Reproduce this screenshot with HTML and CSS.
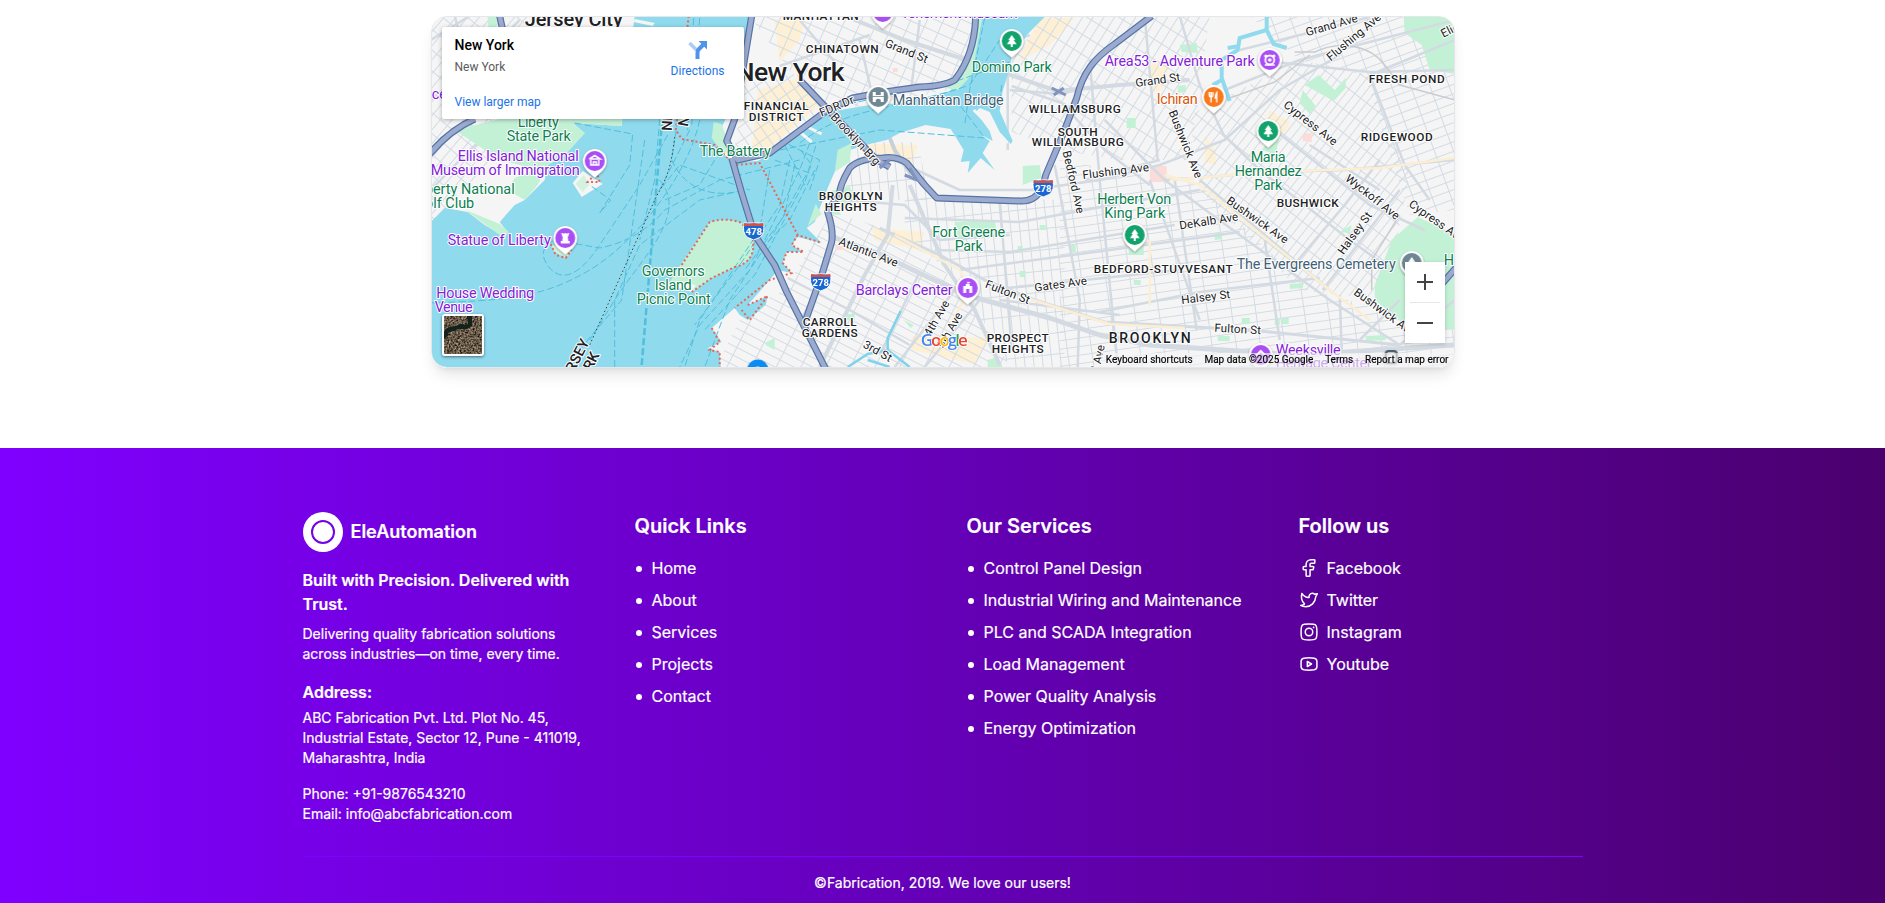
FILE: index.html
```html
<!DOCTYPE html>
<html lang="en">
<head>
<meta charset="utf-8">
<title>EleAutomation</title>
<link rel="stylesheet" href="styles.css">
</head>
<body>
<main class="map-section">
  <div class="map">
    <svg class="map-canvas" viewBox="432.3 17 1022 350" width="1022" height="350">
      <defs>
        <pattern id="g-man" width="15" height="11" patternUnits="userSpaceOnUse" patternTransform="rotate(24)"><path class="st" d="M0 .5H15M.5 0V11"/></pattern>
        <pattern id="g-fid" width="10" height="12" patternUnits="userSpaceOnUse" patternTransform="rotate(-35)"><path class="st" d="M0 .5H10M.5 0V12"/></pattern>
        <pattern id="g-wil" width="17" height="9" patternUnits="userSpaceOnUse" patternTransform="rotate(-58)"><path class="st" d="M0 .5H17M.5 0V9"/></pattern>
        <pattern id="g-bus" width="19" height="7.5" patternUnits="userSpaceOnUse" patternTransform="rotate(-52)"><path class="st" d="M0 .5H19M.5 0V7.5"/></pattern>
        <pattern id="g-bed" width="24" height="8.5" patternUnits="userSpaceOnUse" patternTransform="rotate(-8)"><path class="st" d="M0 .5H24M.5 0V8.5"/></pattern>
        <pattern id="g-cla" width="9" height="21" patternUnits="userSpaceOnUse" patternTransform="rotate(-6)"><path class="st" d="M0 .5H9M.5 0V21"/></pattern>
        <pattern id="g-car" width="22" height="8.5" patternUnits="userSpaceOnUse" patternTransform="rotate(27)"><path class="st" d="M0 .5H22M.5 0V8.5"/></pattern>
        <pattern id="g-red" width="9" height="16" patternUnits="userSpaceOnUse" patternTransform="rotate(40)"><path class="st" d="M0 .5H9M.5 0V16"/></pattern>
        <pattern id="g-rid" width="18" height="9" patternUnits="userSpaceOnUse" patternTransform="rotate(-20)"><path class="st" d="M0 .5H18M.5 0V9"/></pattern>
        <g id="pin"><path d="M0 17C-3 13-12 9-12 0A12 12 0 0 1 12 0C12 9 3 13 0 17Z" fill="#fff"/><circle r="10"/></g>
        <path id="tree" d="M0-6L3.5-1H2L4.8 3.3H1V6H-1V3.3H-4.8L-2-1H-3.5Z" fill="#fff"/>
        <g id="shield"><path d="M-9.500-8H9.500Q12 2 6 6.500Q2 8 0 9Q-2 8-6 6.500Q-12 2-9.500-8Z" fill="#1967d2" stroke="#fff"/><path d="M-9.500-8L-5-7L0-8L5-7L9.500-8L10-5H-10Z" fill="#d94f43"/></g>
      </defs>

      <rect x="431" y="16" width="1025" height="352" fill="#f5f5f5"/>

      <!-- business areas -->
      <g fill="#fdf0d5">
        <path d="M758 90L800 78L820 105L770 148L752 150ZM775 20L806 16L800 40L780 62ZM1040 18H1075L1050 45L1018 62ZM850 143L918 145L912 165L870 158ZM872 228L925 232L920 250L875 240ZM1205 135L1216 150V165L1205 162ZM1270 110L1290 122L1285 134L1265 125ZM912 336L990 338L975 364L912 350Z"/>
        <path d="M1152 62L1170 64L1163 90L1150 92Z"/>
      </g>

      <!-- neighbourhood street grids -->
      <path fill="url(#g-red)" d="M431 16H530V119L431 225Z"/>
      <path fill="url(#g-man)" d="M750 16H980L960 88L830 112L790 70Z"/>
      <path fill="url(#g-fid)" d="M745 70L800 75L825 112L770 152L735 150Z"/>
      <path fill="url(#g-wil)" d="M1012 60L1045 16H1210L1190 160L1120 160L1060 150L1012 132Z"/>
      <path fill="url(#g-bus)" d="M1190 115L1300 60L1370 75L1410 175L1385 300L1300 290L1200 190Z"/>
      <path fill="url(#g-rid)" d="M1250 16L1455 16V210L1410 215L1365 75L1300 60Z"/>
      <path fill="url(#g-bed)" d="M1060 160L1200 185L1310 290L1455 330V367H1060Z"/>
      <path fill="url(#g-cla)" d="M905 197L1065 200V367H1010L960 280L905 235Z"/>
      <path fill="url(#g-cla)" d="M850 142L918 142L930 200H845Z"/>
      <path fill="url(#g-car)" d="M832 212L905 235L965 290L1010 367H716L745 310L785 290Z"/>

      <!-- parks -->
      <g fill="#c3f1d5">
        <path d="M1404 16H1456V74L1430 70L1422 45L1405 33Z"/>
        <path d="M1418 217L1456 235V330L1405 325L1375 300L1375 285L1392 240Z"/>
        <path d="M1305 85L1319 75L1335 90L1346 78V88L1334 101Z"/>
        <path d="M1303 90L1316 106L1310 114L1300 103ZM955 222L995 220L997 232L965 240L955 238ZM1023 166L1040 165L1042 178L1023 185ZM1180 45L1197 43L1198 53L1182 52ZM1178 86L1186 85V92L1178 93ZM1127 118H1136V128H1127ZM1129 246H1144V255H1129ZM1268 142L1280 135L1276 154L1262 150ZM835 207L828 214L842 215ZM988 367V360L998 357L1003 367ZM1290 284L1304 283L1303 288L1290 289ZM1366 336L1386 335V340L1366 341ZM1340 232L1352 225L1350 233ZM1215 233L1222 232V239L1215 240ZM847 314H855V320H847ZM904 320L914 325L911 328ZM765 343L775 338V350L766 345ZM820 194L850 186L855 200L848 207Z"/>
        <path d="M1018 246H1023V252H1018ZM1040 225H1046V230H1040ZM1020 271H1026V277H1020ZM1071 245H1076V252H1071ZM1134 280H1141V285H1134ZM1242 318H1250V324H1242ZM1275 318H1280V325H1275ZM1282 318H1289V324H1282ZM1218 336H1230V341H1218Z"/>
        <path d="M736 16H742L740 30H736ZM488 16H497V30L489 32Z"/>
      </g>
      <path d="M1150 166H1167V182H1150ZM1303 134L1312 133V142L1303 141ZM836 246H844V250H836ZM893 68H898V72H893Z" fill="#fbdcd8"/>

      <!-- arterial streets -->
      <g class="road">
        <path d="M845 16L905 40L970 61L1057 91L1120 85L1190 80" stroke-width="4"/>
        <path d="M860 40L872 93M800 20L835 62M780 66L870 35M920 20L912 85M960 60L1030 35M1010 90L1060 94L1095 86"/>
        <path d="M878 108L895 150L915 180" stroke-width="4" stroke="#c9d0d8"/>
        <path d="M1008 62V150M1012 86L1062 103L1105 150L1150 185M1043 188L1100 180L1160 165L1225 140L1280 90L1340 55"/>
        <path d="M1180 16L1200 85L1224 135L1260 170M1145 16L1158 160M1160 160L1085 180M1105 120L1165 180L1240 235L1330 300L1400 345"/>
        <path d="M1275 62L1370 72L1455 70M1370 75L1455 40M1370 75L1405 165L1430 200M1225 90L1300 60L1455 20"/>
        <path d="M1240 50L1320 30L1370 17M1275 130L1370 205L1425 230M1310 145L1380 190M1165 180L1275 172L1345 170L1455 160"/>
        <path d="M1200 180L1330 290M1260 170L1350 240L1385 265M1290 270L1345 205L1380 160M1323 290L1400 190"/>
        <path d="M910 185L945 265L975 310L1000 365M893 185L888 235L865 275L820 367" stroke-width="4"/>
        <path d="M830 236L880 254L930 278L970 296L1050 318L1100 335L1150 345L1300 355L1455 345" stroke-width="5"/>
        <path d="M880 228L940 255L985 280L1035 300L1105 322L1250 330L1400 345" stroke-width="3"/>
        <path d="M905 218L1020 222L1140 200L1200 190M935 250L1010 252L1175 225M960 270L1110 250L1240 232M1008 288L1180 270M1100 312L1200 292L1320 278M1000 300L1120 315"/>
        <path d="M1000 200L1012 350M1055 165L1080 300L1078 367M1090 60L1100 180L1118 367M1150 180L1200 320M1175 180L1197 330M1265 240L1280 340M1340 295L1342 350"/>
        <path d="M788 278L850 310L910 345M955 290L895 367M980 300L925 367M920 272L880 355M845 200L905 205L940 240L1010 235"/>
        <path d="M895 160L960 190L1045 190M1400 345L1455 300M1360 340L1400 300"/>
        <path d="M431 100L480 60L520 20M431 40L470 16M455 16L475 90M431 190L470 150L500 125"/>
      </g>
      <g class="yellow-road">
        <path d="M1165 175L1200 185L1330 290L1370 320M1170 180L1270 172L1380 168L1455 158M1030 299L1110 324L1185 328M1150 240V305M895 235L960 270L970 290L950 325"/>
      </g>
      <path d="M1295 52H1315C1340 40 1370 45 1385 65L1400 85L1455 100M1230 98L1275 82L1310 55M1372 290V260L1400 215" fill="none" stroke="#c9ccd0" stroke-width="1.500"/>

      <!-- water -->
      <g fill="#90daee">
        <path d="M635 16H750L742 90L726 119L715 141L725 155L734 162L758 161L770 155L803 131L823 113L870 105L903 103L950 91L967 75L976 16H1046L1027 35L1012 58L1008 75L1003 91L1000 111L1013 141L1011 144L1000 132L990 112L980 108L976 112L990 131L993 141L980 134L990 141L983 153L995 170L981 158L968 173L970 161L961 162L964 150L951 129L926 125L900 133L887 140L870 144L850 150L838 165L828 188L822 203L815 222L807 228L822 243L798 237L792 245L804 252L787 252L783 263L792 273L778 270L770 280L748 305L768 296L766 305L748 320L740 315L735 308L712 328L722 342L708 348L720 352L721 368H431V222L445 208L468 212L485 225L505 237L508 232L500 222L515 205L525 200L545 180L548 165L565 155L585 133L573 123L622 126L625 90Z"/>
      </g>
      <path d="M1267 16V30L1240 38L1238 50L1222 60V78L1230 101M1267 30L1274 44L1287 48M1222 80L1213 85M1240 46L1228 48" fill="none" stroke="#90daee" stroke-width="4"/>
      <path d="M901 311L888 338V350L868 354L848 367M888 350L910 367M868 360L890 367" fill="none" stroke="#7fd3ea" stroke-width="2.500"/>

      <!-- shoreline parks and islands -->
      <g fill="#c3f1d5">
        <path d="M500 119H622V126L573 123L585 133L565 155L540 170L500 160L455 130ZM515 178L548 165L538 185L525 200L508 190Z"/>
        <path d="M710 222Q727 217 742 223L753 238Q757 262 735 267L712 278L692 292L670 282L682 263Z"/>
        <path d="M714 122L722 124L733 155L722 152L712 138ZM976 16H983L972 75L958 90L945 88L965 72ZM816 204L822 214L808 226ZM838 150L852 143L850 162L835 172ZM466 210L500 224L509 232L504 238Z"/>
      </g>
      <path d="M470 205L498 188L515 203L500 222ZM573 183L583 171L603 184L582 197ZM635 19L655 23L653 26L634 22Z" fill="#f5f5f5"/>
      <path d="M576 184L584 175L590 184L583 192ZM551 244L572 252L566 258L555 252Z" fill="#d3f3e0"/>
      <path d="M806 126L822 134M800 132L812 142M974 110L1008 143" stroke="#f5f5f5" stroke-width="3"/>
      <path d="M683 282L696 285L692 292L676 287Z" fill="#f5f5f5"/>

      <!-- ferry routes -->
      <g class="ferry">
        <path d="M575 123L633 134L630 165L600 213L611 200L590 185M668 135L640 185L600 245Q570 290 550 268Q535 250 555 240L600 248Q640 240 665 210L720 180L800 160M645 140L622 300L565 367M700 120C690 170 640 240 590 270S500 300 431 303"/>
        <path d="M690 130L660 190L680 165L750 190M678 120L672 160C690 200 730 195 742 190M615 367V300L640 245L700 200L745 190M660 180C690 215 640 260 615 300L590 340"/>
        <path d="M694 18L688 130M700 18L692 125M660 119L655 180L640 240M715 160L700 185L665 200M770 170L760 230L700 320L685 367"/>
        <path d="M810 143L800 170L750 270L700 325L680 367M816 146L806 180L755 275L705 330M801 150L812 165L770 240L730 300L705 367M780 150L810 144L880 130L985 138L960 105M800 143C850 105 900 110 970 85L1000 40M985 18L970 90L965 125M1002 85L1000 100M830 108L960 80L1010 62"/>
        <path d="M642 365L654 220L662 125" stroke-width="2.500"/>
        <path d="M790 160L780 205L740 265L695 325M795 165L785 215L745 270M815 170L790 220L765 245M780 140L820 160L810 190M785 145L805 185M775 160L815 175"/>
      </g>
      <path d="M675 137C670 180 662 185 655 200L590 345" fill="none" stroke="#3c4043" stroke-dasharray="1.500 2.500"/>
      <g class="red-dots">
        <path d="M689 16L676 130L682 139L715 145L735 165L760 163L798 235L822 243M798 235L792 245L804 252L787 252L783 263L792 273L770 280L735 308M712 328L720 342L710 350L720 352V367M748 305L768 296L750 320L742 310"/>
        <path d="M682 265L710 222Q727 217 742 223L753 238Q757 262 735 267L712 278L692 292"/>
        <path d="M592 178L588 182H600L598 175M551 244L556 255L566 258L572 250"/>
      </g>

      <!-- highways -->
      <g>
        <g class="hw-case"><path id="hw" d="M1152 16L1115 44C1095 58 1083 72 1077 98L1063 135L1046 175L1043 188Q1035 202 1020 201L937 198L925 185L907 163Q897 156 883 158Q860 158 850 168Q840 185 840 193L828 212Q834 230 832 242L823 272L806 320M976 16Q975 55 955 80Q945 86 920 87L885 92L853 98L825 112L770 153L738 160L727 141L735 119L752 16M732 158L742 193L755 235L775 265L787 292L826 369M800 80L820 101L877 160L890 167M475 119Q450 130 430 154M1456 268L1443 283M500 16L503 30"/></g>
        <use href="#hw" class="hw-fill"/>
        <path d="M1052 88L1066 95M1054 95L1064 88M905 175L917 180L910 168M880 168L890 160" stroke="#8094bd" stroke-width="3" fill="none"/>
      </g>

      <!-- neighbourhood labels -->
      <g class="lbl area">
        <text x="783" y="19.500" textLength="76">MANHATTAN</text>
        <text x="806" y="53" textLength="73">CHINATOWN</text>
        <text x="744" y="109.500" textLength="65">FINANCIAL</text>
        <text x="749" y="120.500" textLength="55">DISTRICT</text>
        <text x="1029" y="112.500" textLength="92">WILLIAMSBURG</text>
        <text x="1058" y="135.500" textLength="40">SOUTH</text>
        <text x="1032" y="146" textLength="92">WILLIAMSBURG</text>
        <text x="1369" y="82.500" textLength="76">FRESH POND</text>
        <text x="1361" y="140.500" textLength="72">RIDGEWOOD</text>
        <text x="1277" y="206.500" textLength="62">BUSHWICK</text>
        <text x="1094" y="272.500" textLength="139">BEDFORD-STUYVESANT</text>
        <text x="819" y="200" textLength="64">BROOKLYN</text>
        <text x="825" y="211" textLength="52">HEIGHTS</text>
        <text x="803" y="326" textLength="54">CARROLL</text>
        <text x="802" y="336.500" textLength="56">GARDENS</text>
        <text x="987" y="342" textLength="62">PROSPECT</text>
        <text x="992" y="353" textLength="52">HEIGHTS</text>
        <text x="1109" y="343" textLength="82" font-size="14">BROOKLYN</text>
      </g>

      <!-- street labels -->
      <g class="lbl street">
        <text transform="translate(907 51) rotate(22)" y="4">Grand St</text>
        <text transform="translate(837 106) rotate(-23)" y="4">FDR Dr</text>
        <text transform="translate(856 139) rotate(47)" y="4">Brooklyn Brg</text>
        <text transform="translate(1074 182) rotate(77)" y="4">Bedford Ave</text>
        <text transform="translate(1116 171) rotate(-7)" y="4">Flushing Ave</text>
        <text transform="translate(1158 80) rotate(-8)" y="4">Grand St</text>
        <text transform="translate(1186 144) rotate(68)" y="4">Bushwick Ave</text>
        <text transform="translate(1332 25) rotate(-16)" y="4">Grand Ave</text>
        <text transform="translate(1354 37) rotate(-40)" y="4">Flushing Ave</text>
        <text transform="translate(1462 24) rotate(-27)" y="4">Eliot Ave</text>
        <text transform="translate(1311 123) rotate(38)" y="4">Cypress Ave</text>
        <text transform="translate(1373 197) rotate(38)" y="4">Wyckoff Ave</text>
        <text transform="translate(1258 220) rotate(35)" y="4">Bushwick Ave</text>
        <text transform="translate(1355 233) rotate(-54)" y="4">Halsey St</text>
        <text transform="translate(1437 221) rotate(35)" y="4">Cypress Ave</text>
        <text transform="translate(1209 221) rotate(-9)" y="4">DeKalb Ave</text>
        <text transform="translate(1206 297) rotate(-7)" y="4">Halsey St</text>
        <text transform="translate(1385 312) rotate(36)" y="4">Bushwick Ave</text>
        <text transform="translate(1238 329) rotate(3)" y="4">Fulton St</text>
        <text transform="translate(869 252) rotate(21)" y="4">Atlantic Ave</text>
        <text transform="translate(1008 292) rotate(21)" y="4">Fulton St</text>
        <text transform="translate(1061 284) rotate(-8)" y="4">Gates Ave</text>
        <text transform="translate(937 318) rotate(-60)" y="4">4th Ave</text>
        <text transform="translate(950 330) rotate(-60)" y="4">5th Ave</text>
        <text transform="translate(878 351) rotate(29)" y="4">3rd St</text>
        <text transform="translate(1097 364) rotate(-78)" y="4">3rd Ave</text>
      </g>

      <!-- city and state labels -->
      <g class="lbl city">
        <text x="525" y="26" font-size="20" textLength="98">Jersey City</text>
        <text x="736" y="81" font-size="26.500" textLength="109">New York</text>
        <g font-size="14.500">
          <text transform="translate(672 131) rotate(-87)">NEW JERSEY</text>
          <text transform="translate(688 127) rotate(-80)">NEW YORK</text>
          <text transform="translate(590 342) rotate(-63)" text-anchor="end">JERSEY</text>
          <text transform="translate(600 355) rotate(-63)" text-anchor="end">YORK</text>
        </g>
      </g>

      <!-- parks -->
      <g class="lbl poi green">
        <text x="518" y="127" textLength="41">Liberty</text>
        <text x="507" y="141" textLength="64">State Park</text>
        <text x="515" y="194" text-anchor="end">Liberty National</text>
        <text x="474.500" y="208" text-anchor="end">Golf Club</text>
        <text x="642" y="275.500" textLength="63">Governors</text>
        <text x="655" y="289.500" textLength="37">Island</text>
        <text x="637" y="303.500" textLength="74">Picnic Point</text>
        <text x="700" y="155.500" textLength="71">The Battery</text>
        <text x="972" y="72" textLength="80">Domino Park</text>
        <text x="1251" y="162" textLength="35">Maria</text>
        <text x="1235" y="176" textLength="67">Hernandez</text>
        <text x="1254.500" y="190" textLength="28">Park</text>
        <text x="1097.500" y="204" textLength="74">Herbert Von</text>
        <text x="1104.500" y="218" textLength="61">King Park</text>
        <text x="932.500" y="237" textLength="73">Fort Greene</text>
        <text x="955" y="251" textLength="28">Park</text>
        <text x="1444" y="265">Highland</text>
      </g>
      <!-- attractions -->
      <g class="lbl poi purple">
        <text x="432" y="98.500">ce</text>
        <text x="458" y="161" textLength="121">Ellis Island National</text>
        <text x="431" y="175" textLength="149">Museum of Immigration</text>
        <text x="448" y="245" textLength="103">Statue of Liberty</text>
        <text x="436.500" y="298" textLength="98">House Wedding</text>
        <text x="435" y="312" textLength="38">Venue</text>
        <text x="901" y="18" textLength="117">Tenement Museum</text>
        <text x="1105" y="66" textLength="150">Area53 - Adventure Park</text>
        <text x="856" y="295" textLength="97">Barclays Center</text>
        <text x="1276" y="354.500" textLength="65">Weeksville</text>
        <text x="1276" y="368" textLength="96">Heritage Center</text>
      </g>
      <g class="lbl poi slate">
        <text x="893" y="104.500" textLength="111">Manhattan Bridge</text>
        <text x="1237" y="269" textLength="159">The Evergreens Cemetery</text>
      </g>
      <g class="lbl poi orange"><text x="1157" y="104" textLength="41">Ichiran</text></g>

      <!-- pins -->
      <g class="pins">
        <g transform="translate(595 161)" fill="#a94df5"><use href="#pin"/><path d="M-5.500-2L0-5.500L5.500-2H-5.500M-4-1V4H4V-1M-1.500 4V1H1.500V4" fill="none" stroke="#fff" stroke-width="1.500"/></g>
        <g transform="translate(565.500 238)" fill="#a94df5"><use href="#pin"/><path d="M-4-5H-2V-4H-1V-5H1V-4H2V-5H4L3-1.500H2.500L3 3H4.500V5.500H-4.500V3H-3L-2.500-1.500H-3Z" fill="#fff"/></g>
        <g transform="translate(883 12)" fill="#a94df5"><use href="#pin"/></g>
        <g transform="translate(1270 60)" fill="#a94df5"><use href="#pin"/><circle r="4.500" fill="none" stroke="#fff" stroke-width="1.800"/><circle r="1.800" fill="#fff"/><circle cx="-4" cy="-4" r="1.600" fill="#fff"/><circle cx="4" cy="-4" r="1.600" fill="#fff"/><path d="M-5 5H5" stroke="#fff" stroke-width="1.500"/></g>
        <g transform="translate(968 288)" fill="#a94df5"><use href="#pin"/><path d="M-4.500 5V-2H-2V-4H2V-2H4.500V5H1.500V1H-1.500V5ZM-.500-6.500L3-5.500L.500-4.500V-3H-.500Z" fill="#fff"/></g>
        <g transform="translate(1261 355)" fill="#a94df5"><use href="#pin"/><path d="M-5 1L0-4L5 1" fill="none" stroke="#fff" stroke-width="2"/></g>
        <g transform="translate(878.500 97)" fill="#6f8793"><use href="#pin"/><path d="M-5.500 5V-5H-2.500V-2H2.500V-5H5.500V5H2.500V3Q0 .5-2.500 3V5Z" fill="#fff"/><path d="M-6-.5H6" stroke="#6f8793" stroke-width=".8"/></g>
        <g transform="translate(1412 263)" fill="#6f8793"><use href="#pin"/><use href="#tree"/></g>
        <g transform="translate(1214 97)" fill="#f9791c"><use href="#pin"/><path d="M-4.500-5V-2Q-4.500 0-2.700 0V5.500M-.9-5V-2Q-.9 0-2.700 0V-5M3 5.500V-4.500Q1.500-3 1.500 1H3" fill="none" stroke="#fff" stroke-width="1.400"/></g>
        <g transform="translate(1012 41)" fill="#12a26b"><use href="#pin"/><use href="#tree"/></g>
        <g transform="translate(1268.500 131)" fill="#12a26b"><use href="#pin"/><use href="#tree"/></g>
        <g transform="translate(1135 235)" fill="#12a26b"><use href="#pin"/><use href="#tree"/></g>
        <g transform="translate(758 370)" fill="#0b8cf5"><circle r="10.500"/><circle r="3.500" fill="#fff"/></g>
        <rect x="1386" y="351" width="11" height="12" rx="3" fill="none" stroke="#4b5f70" stroke-width="2"/>
      </g>
      <g class="shields">
        <use href="#shield" x="754" y="231"/><text x="754" y="235">478</text>
        <use href="#shield" x="1043.500" y="188"/><text x="1043.500" y="192">278</text>
        <use href="#shield" x="821" y="282"/><text x="821" y="286">278</text>
      </g>
      <text class="google" x="921" y="346" textLength="47"><tspan fill="#4285f4">G</tspan><tspan fill="#ea4335">o</tspan><tspan fill="#fbbc05">o</tspan><tspan fill="#4285f4">g</tspan><tspan fill="#34a853">l</tspan><tspan fill="#ea4335">e</tspan></text>
    </svg>

    <div class="place-card">
      <div class="place-info">
        <div class="place-name">New York</div>
        <div class="place-address">New York</div>
        <a class="place-link">View larger map</a>
      </div>
      <a class="directions">
        <svg width="20" height="20" viewBox="0 0 20 20"><path d="M1.500 3L8.500 10" stroke="#aecbf5" stroke-width="3.600"/><path d="M9.500 19V12.500Q9.500 10.500 11 9L15 5" fill="none" stroke="#4d94ea" stroke-width="4"/><path d="M10.500 1H19V9.500Z" fill="#4d94ea"/></svg>
        <span>Directions</span>
      </a>
    </div>

    <div class="satellite">
      <svg width="38" height="38" viewBox="0 0 38 38">
        <filter id="noise" x="0" y="0" width="100%" height="100%" color-interpolation-filters="sRGB"><feTurbulence type="fractalNoise" baseFrequency=".55" numOctaves="2"/><feColorMatrix values="1 .3 0 0 -.25  .95 .3 0 0 -.28  .85 .25 0 0 -.27  0 0 0 0 1"/></filter>
        <rect width="38" height="38" filter="url(#noise)"/>
        <path d="M0 16C4 8 9 12 14 9S20 10 24 8L23 0H28V9C24 16 17 11 12 14S4 14 4 20L0 23Z" fill="#14211d"/>
      </svg>
    </div>

    <div class="zoom">
      <span><svg width="18" height="18" viewBox="0 0 18 18"><path d="M1 9H17M9 1V17" stroke="#444" stroke-width="2"/></svg></span>
      <i></i>
      <span><svg width="18" height="18" viewBox="0 0 18 18"><path d="M1 9H17" stroke="#444" stroke-width="2"/></svg></span>
    </div>

    <div class="attribution">
      <span>Keyboard shortcuts</span><span>Map data ©2025 Google</span><span>Terms</span><span>Report a map error</span>
    </div>
  </div>
</main>

<footer class="footer">
  <div class="footer-inner">
    <div class="columns">
      <section>
        <div class="brand">
          <svg width="40" height="40" viewBox="0 0 40 40"><circle cx="20" cy="20" r="20" fill="#fff"/><circle cx="20" cy="20" r="11" fill="#fff" stroke="#7400e4" stroke-width="2"/></svg>
          <span>EleAutomation</span>
        </div>
        <h4 class="tagline">Built with Precision. Delivered with Trust.</h4>
        <p class="copy">Delivering quality fabrication solutions across industries—on time, every time.</p>
        <h4 class="address-title">Address:</h4>
        <p class="address">ABC Fabrication Pvt. Ltd. Plot No. 45, Industrial Estate, Sector 12, Pune - 411019, Maharashtra, India</p>
        <p class="contact">Phone: +91-9876543210<br>Email: info@abcfabrication.com</p>
      </section>
      <section>
        <h3>Quick Links</h3>
        <ul class="links">
          <li>Home</li><li>About</li><li>Services</li><li>Projects</li><li>Contact</li>
        </ul>
      </section>
      <section>
        <h3>Our Services</h3>
        <ul class="links">
          <li>Control Panel Design</li><li>Industrial Wiring and Maintenance</li><li>PLC and SCADA Integration</li><li>Load Management</li><li>Power Quality Analysis</li><li>Energy Optimization</li>
        </ul>
      </section>
      <section>
        <h3>Follow us</h3>
        <ul class="social">
          <li><svg class="icon" viewBox="0 0 24 24"><path d="M6.182 10.333C5.204 10.333 5 10.525 5 11.444V13.111C5 14.030 5.204 14.222 6.182 14.222H8.545V20.889C8.545 21.808 8.750 22 9.727 22H12.091C13.069 22 13.273 21.808 13.273 20.889V14.222H15.927C16.668 14.222 16.859 14.087 17.063 13.416L17.570 11.750C17.919 10.601 17.704 10.333 16.433 10.333H13.273V7.556C13.273 6.942 13.802 6.444 14.455 6.444H17.818C18.796 6.444 19 6.253 19 5.333V3.111C19 2.192 18.796 2 17.818 2H14.455C11.191 2 8.545 4.487 8.545 7.556V10.333H6.182Z"/></svg>Facebook</li>
          <li><svg class="icon" viewBox="0 0 24 24"><path d="M2 18.500C3.765 19.521 5.814 20 8 20C14.481 20 19.762 14.863 19.992 8.438L22 4.500L18.646 5C17.941 4.378 17.014 4 16 4C13.428 4 11.501 6.517 12.121 8.980C8.568 9.209 5.349 7.021 3.487 4.105C2.251 8.302 3.396 13.356 6.500 16.471C6.500 17.647 3.500 18.349 2 18.500Z"/></svg>Twitter</li>
          <li><svg class="icon" viewBox="0 0 24 24"><path d="M2.500 12C2.500 7.522 2.500 5.282 3.891 3.891C5.282 2.500 7.522 2.500 12 2.500C16.478 2.500 18.718 2.500 20.109 3.891C21.500 5.282 21.500 7.522 21.500 12C21.500 16.478 21.500 18.718 20.109 20.109C18.718 21.500 16.478 21.500 12 21.500C7.522 21.500 5.282 21.500 3.891 20.109C2.500 18.718 2.500 16.478 2.500 12Z"/><circle cx="12" cy="12" r="4.500"/><path d="M17.508 6.500H17.499" stroke-width="2"/></svg>Instagram</li>
          <li><svg class="icon" viewBox="0 0 24 24"><path d="M12 19.500C14.200 19.500 16.300 19.300 18.200 19C20.700 18.500 21.500 17.500 21.500 15V9C21.500 6.500 20.700 5.500 18.200 5C16.300 4.700 14.200 4.500 12 4.500S7.700 4.700 5.800 5C3.300 5.500 2.500 6.500 2.500 9V15C2.500 17.500 3.300 18.500 5.800 19C7.700 19.300 9.800 19.500 12 19.500Z"/><path d="M10 9V15L15 12Z"/></svg>Youtube</li>
        </ul>
      </section>
    </div>
    <div class="copyright">©Fabrication, 2019. We love our users!</div>
  </div>
</footer>
</body>
</html>
```

FILE: styles.css
```css
* { box-sizing: border-box; }

body {
  margin: 0;
  height: 903px;
  overflow: hidden;
  background: #fff;
  font-family: Inter, sans-serif;
}

.map-section {
  height: 448px;
  padding-top: 16px;
}

.map {
  position: relative;
  width: 1024px;
  height: 352px;
  margin: 0 auto;
  border: 1px solid #e5e7eb;
  border-radius: 16px;
  overflow: hidden;
  box-shadow: 0 10px 15px -3px rgba(0, 0, 0, .1), 0 4px 6px -4px rgba(0, 0, 0, .1);
  font-family: Roboto, sans-serif;
}

.map-canvas { display: block; }
.st { fill: none; stroke: #d3dbe3; stroke-width: 1; }
.road { fill: none; stroke: #d3dae2; stroke-width: 2.5; stroke-linejoin: round; }
.yellow-road { fill: none; stroke: #fbeed3; stroke-width: 2.5; stroke-linejoin: round; }
.ferry { fill: none; stroke: #50bfdb; stroke-width: 1; stroke-dasharray: 7 3; }
.red-dots { fill: none; stroke: #e2695a; stroke-width: 2; stroke-dasharray: 2 2.5; }
.hw-case { fill: none; stroke: #5673a6; stroke-width: 7; stroke-linejoin: round; }
#hw { stroke-linejoin: round; fill: none; }
.hw-fill { stroke: #9babcf; stroke-width: 4.6; }

.lbl {
  paint-order: stroke;
  stroke: #fff;
  stroke-width: 2px;
  stroke-linejoin: round;
}
.area { font-size: 11.8px; font-weight: 500; fill: #202124; }
.street { font-size: 11.6px; fill: #202124; text-anchor: middle; letter-spacing: .1px; }
.city { font-weight: 500; fill: #202124; }
.poi { font-size: 14.4px; }
.green { fill: #0d7f51; }
.purple { fill: #8421d8; }
.slate { fill: #3f6075; }
.orange { fill: #d9560b; }
.pins { filter: drop-shadow(0 1px 1px rgba(0, 0, 0, .35)); }
.shields { font-size: 9.5px; font-weight: 700; fill: #fff; text-anchor: middle; }
.google {
  font: 600 17px "Open Sans", sans-serif;
  paint-order: stroke;
  stroke: #fff;
  stroke-width: 1.5px;
}

.place-card {
  position: absolute;
  top: 10px;
  left: 10px;
  width: 302px;
  height: 92px;
  padding: 9px 19px 0 13px;
  display: flex;
  justify-content: space-between;
  background: #fff;
  border-radius: 2px;
  box-shadow: 0 1px 4px rgba(0, 0, 0, .3);
  font-size: 12px;
}
.place-name { font-size: 14px; line-height: 18px; font-weight: 500; color: #000; }
.place-address { margin-top: 5px; line-height: 16px; color: #5b5b5b; }
.place-link { display: block; margin-top: 19px; line-height: 16px; color: #1a73e8; }
.directions {
  display: flex;
  flex-direction: column;
  align-items: center;
  gap: 4px;
  padding-top: 4px;
  line-height: 14px;
  color: #1a73e8;
}

.satellite {
  position: absolute;
  left: 10px;
  top: 297px;
  width: 42px;
  height: 42px;
  border: 2px solid #fff;
  border-radius: 3px;
  overflow: hidden;
  box-shadow: 0 1px 3px rgba(0, 0, 0, .5);
}
.satellite svg { display: block; }

.zoom {
  position: absolute;
  right: 9px;
  top: 245px;
  width: 40px;
  height: 81px;
  display: flex;
  flex-direction: column;
  align-items: center;
  background: #fff;
  box-shadow: 0 1px 4px rgba(0, 0, 0, .2);
}
.zoom span { height: 40px; display: flex; align-items: center; }
.zoom i { width: 30px; height: 1px; background: #e6e6e6; }

.attribution {
  position: absolute;
  right: 0;
  bottom: 0;
  height: 14px;
  padding: 0 5px;
  display: flex;
  gap: 11.8px;
  background: rgba(245, 245, 245, .65);
  font-size: 10px;
  line-height: 14px;
  color: #000;
  -webkit-text-stroke: .15px #000;
}

.footer {
  padding-top: 64px;
  height: 477px;
  color: #fff;
  background: linear-gradient(to right, #7f00ff, #4a006e);
  -webkit-text-stroke: .2px #fff;
}
.footer-inner { width: 1280px; margin: 0 auto; }
.columns {
  display: grid;
  grid-template-columns: repeat(4, 1fr);
  column-gap: 48px;
  padding-bottom: 32px;
}
.brand {
  display: flex;
  align-items: center;
  gap: 8px;
  font-size: 18px;
  font-weight: 600;
}
.brand span { margin-top: -2px; }
h3, h4, p, ul { margin: 0; padding: 0; }
h3 { font-size: 20px; line-height: 28px; font-weight: 600; margin-bottom: 16px; }
h4 { font-size: 16px; line-height: 24px; font-weight: 600; }
p { font-size: 14px; line-height: 20px; }
.tagline { margin: 16px 0 8px; }
.address-title { margin: 16px 0 4px; }
.contact { margin-top: 16px; }

li { line-height: 24px; font-size: 16px; }
li + li { margin-top: 8px; }
ul { list-style: none; }
.links li { display: flex; align-items: center; }
.links li::before {
  content: "";
  width: 6px;
  height: 6px;
  margin: 2px 9.5px 0 1.5px;
  border-radius: 50%;
  background: #fff;
}
.social li { display: flex; align-items: center; gap: 8px; }
.icon {
  width: 20px;
  height: 20px;
  fill: none;
  stroke: #fff;
  stroke-width: 1.8;
  stroke-linecap: round;
  stroke-linejoin: round;
}

.copyright {
  border-top: 1px solid #7f00ff;
  padding-top: 16px;
  text-align: center;
  font-size: 14px;
  line-height: 20px;
}
```
